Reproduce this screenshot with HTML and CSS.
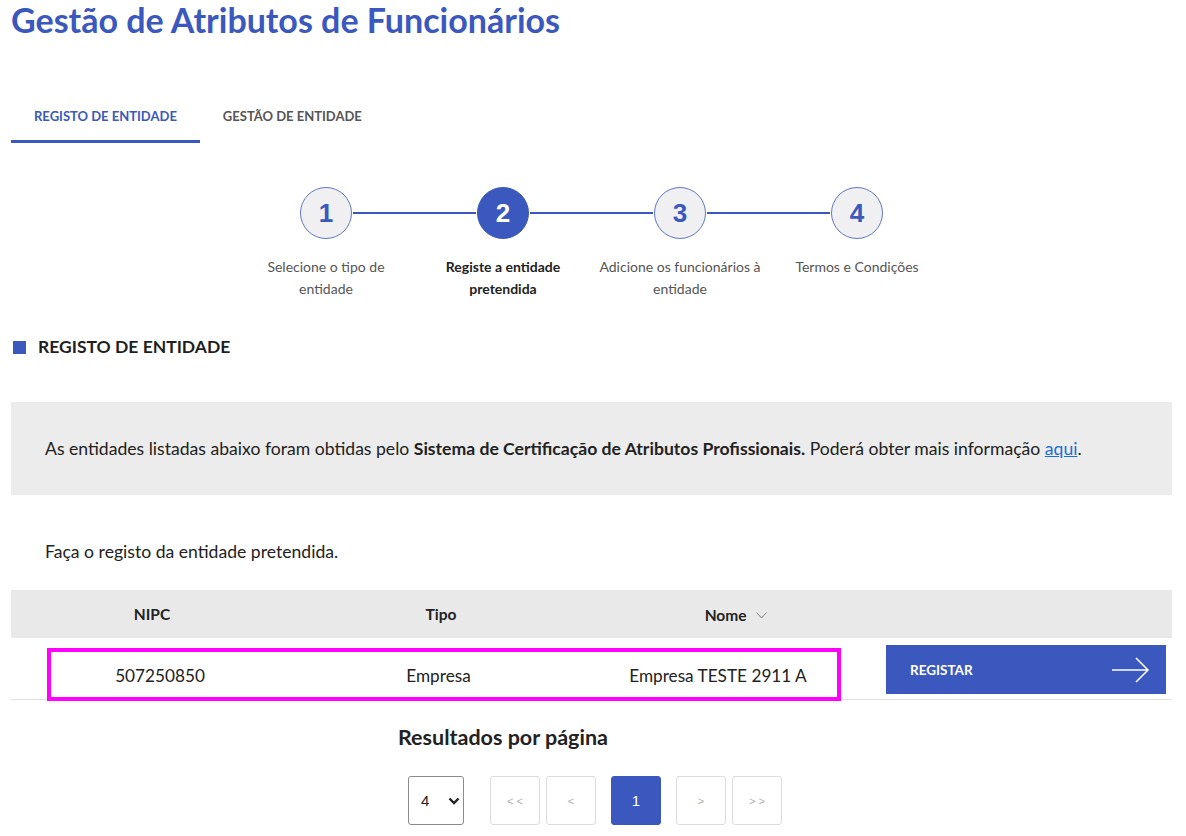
FILE: index.html
```html
<!DOCTYPE html>
<html lang="pt">
<head>
    <meta charset="UTF-8">
    <meta name="viewport" content="width=device-width, initial-scale=1.0">
    <title>Gestão de Atributos de Funcionários</title>
    <link rel="stylesheet" href="styles.css">
</head>
<body>
    <main class="page">
        <h1 class="page-title">Gestão de Atributos de Funcionários</h1>

        <!-- Tabs -->
        <nav class="tabs">
            <a class="tab active" href="#">REGISTO DE ENTIDADE</a>
            <a class="tab" href="#">GESTÃO DE ENTIDADE</a>
        </nav>

        <!-- Stepper -->
        <ol class="stepper">
            <li class="step">
                <span class="step-circle">1</span>
                <span class="step-label">Selecione o tipo de entidade</span>
            </li>
            <li class="step current">
                <span class="step-circle">2</span>
                <span class="step-label">Registe a entidade pretendida</span>
            </li>
            <li class="step">
                <span class="step-circle">3</span>
                <span class="step-label">Adicione os funcionários à entidade</span>
            </li>
            <li class="step">
                <span class="step-circle">4</span>
                <span class="step-label">Termos e Condições</span>
            </li>
        </ol>

        <h2 class="section-title"><span class="section-mark"></span>REGISTO DE ENTIDADE</h2>

        <div class="info-box">
            As entidades listadas abaixo foram obtidas pelo <strong>Sistema de Certificação de Atributos Profissionais.</strong> Poderá obter mais informação <a href="#">aqui</a>.
        </div>

        <p class="intro">Faça o registo da entidade pretendida.</p>

        <!-- Table -->
        <div class="table">
            <div class="table-head">
                <div class="cell">NIPC</div>
                <div class="cell">Tipo</div>
                <div class="cell col-name">Nome <span class="sort-icon">
                    <svg width="11" height="7" viewBox="0 0 11 7"><path d="M0.5 0.5 L5.5 6 L10.5 0.5" fill="none" stroke="#888" stroke-width="1"/></svg>
                </span></div>
                <div class="cell"></div>
            </div>
            <div class="table-row">
                <div class="cell">507250850</div>
                <div class="cell col-type">Empresa</div>
                <div class="cell col-name">Empresa TESTE 2911 A</div>
                <div class="cell action">
                    <button class="btn-register">
                        <span>REGISTAR</span>
                        <svg width="38" height="26" viewBox="0 0 38 26"><path d="M0 13 H36 M24 1 L36 13 L24 25" fill="none" stroke="#fff" stroke-width="1.5"/></svg>
                    </button>
                </div>
                <div class="row-highlight"></div>
            </div>
        </div>

        <!-- Pagination -->
        <div class="pager">
            <h3 class="pager-title">Resultados por página</h3>
            <div class="pager-controls">
                <div class="page-size">
                    <span>4</span>
                    <svg width="12" height="8" viewBox="0 0 12 8"><path d="M1.5 1.5 L6 6 L10.5 1.5" fill="none" stroke="#222" stroke-width="2.4"/></svg>
                </div>
                <div class="pages">
                    <span class="page-btn">&lt; &lt;</span>
                    <span class="page-btn">&lt;</span>
                    <span class="page-btn active">1</span>
                    <span class="page-btn">&gt;</span>
                    <span class="page-btn">&gt; &gt;</span>
                </div>
            </div>
        </div>
    </main>
</body>
</html>
```

FILE: styles.css
```css
/* Base */
body {
    margin: 0;
    font-family: 'Lato', 'Open Sans', sans-serif;
    color: #222;
    background-color: #fff;
}

.page {
    width: 1161px;
    margin-left: 11px;
}

.page-title {
    margin: 0;
    font-size: 34px;
    line-height: 40px;
    font-weight: 700;
    color: #3a58bd;
}

/* Tabs */
.tabs {
    display: flex;
    margin-top: 52px;
}

.tab {
    display: block;
    padding: 16px 23px 15px;
    font-size: 13px;
    line-height: 17px;
    font-weight: 700;
    color: #555;
    text-decoration: none;
    border-bottom: 3px solid transparent;
}

.tab.active {
    color: #3a58bd;
    border-bottom-color: #3a58bd;
}

/* Stepper */
.stepper {
    display: flex;
    justify-content: center;
    list-style: none;
    margin: 44px 0 0;
    padding: 0;
}

.step {
    position: relative;
    width: 177px;
    display: flex;
    flex-direction: column;
    align-items: center;
}

.step:not(:last-child)::after {
    content: '';
    position: absolute;
    top: 25px;
    left: calc(50% + 27px);
    width: calc(100% - 54px);
    height: 2px;
    background-color: #3a58bd;
}

.step-circle {
    width: 50px;
    height: 50px;
    border: 1px solid #5f78c9;
    border-radius: 50%;
    background-color: #f0f0f2;
    display: flex;
    justify-content: center;
    align-items: center;
    font-family: 'Liberation Sans', Arial, sans-serif;
    font-size: 26px;
    font-weight: 700;
    color: #3a58bd;
}

.step.current .step-circle {
    background-color: #3a58bd;
    border-color: #3a58bd;
    color: #fff;
}

.step-label {
    width: 165px;
    margin-top: 17px;
    text-align: center;
    font-size: 14px;
    line-height: 22px;
    color: #555;
}

.step.current .step-label {
    font-weight: 700;
    color: #222;
}

/* Section title */
.section-title {
    display: flex;
    align-items: center;
    margin: 35px 0 0 2px;
    font-size: 17.5px;
    line-height: 24px;
    font-weight: 700;
    color: #1f1f1f;
}

.section-mark {
    width: 13px;
    height: 13px;
    margin-right: 12px;
    background-color: #3a58bd;
}

/* Info box */
.info-box {
    margin-top: 43px;
    padding: 36px 34px 35px;
    font-size: 17.6px;
    line-height: 22px;
    background-color: #ececec;
}

.info-box a {
    color: #1a6fd8;
}

.intro {
    margin: 46px 0 0 34px;
    font-size: 17.6px;
    line-height: 22px;
}

/* Table */
.table {
    margin-top: 27px;
}

.table-head,
.table-row {
    display: grid;
    grid-template-columns: 282px 296px 272px 311px;
    align-items: center;
}

.table-head {
    height: 48px;
    background-color: #e9e9ea;
    font-size: 15.5px;
    font-weight: 700;
}

.table-head .cell {
    text-align: center;
}

.table-head .col-name {
    padding-left: 22px;
}

.sort-icon {
    margin-left: 6px;
    vertical-align: 2px;
}

.table-row {
    position: relative;
    height: 61px;
    border-bottom: 1px solid #e2e2e2;
    font-size: 17.2px;
}

.table-row .cell {
    text-align: center;
    padding-top: 14px;
}

.table-row .cell:first-child {
    padding-left: 16px;
}

.table-row .col-type {
    padding-right: 5px;
}

.table-row .col-name {
    padding-right: 14px;
}

.table-row .cell.action {
    padding-top: 2px;
    text-align: left;
    padding-left: 25px;
}

.btn-register {
    width: 280px;
    height: 49px;
    border: none;
    background-color: #3a58bd;
    color: #fff;
    display: flex;
    align-items: center;
    justify-content: space-between;
    padding: 0 16px 0 24px;
    font-family: 'Lato', sans-serif;
    font-size: 13.5px;
    font-weight: 700;
    cursor: pointer;
}

.row-highlight {
    position: absolute;
    left: 36px;
    top: 10px;
    width: 786px;
    height: 45px;
    border: 4px solid #ff00ff;
    pointer-events: none;
}

/* Pagination */
.pager {
    margin: 23px 0 0 387px;
}

.pager-title {
    margin: 0;
    font-size: 21.5px;
    line-height: 28px;
    font-weight: 700;
    color: #222;
}

.pager-controls {
    display: flex;
    align-items: center;
    margin: 25px 0 0 10px;
}

.page-size {
    width: 56px;
    height: 49px;
    box-sizing: border-box;
    border: 1px solid #8a8a8a;
    border-radius: 3px;
    display: flex;
    align-items: center;
    justify-content: space-between;
    padding: 0 3px 0 12px;
    font-family: 'Liberation Sans', Arial, sans-serif;
    font-size: 15px;
}

.pages {
    display: flex;
    margin-left: 26px;
}

.page-btn {
    width: 50px;
    height: 49px;
    box-sizing: border-box;
    border: 1px solid #dcdcdc;
    border-radius: 3px;
    display: flex;
    align-items: center;
    justify-content: center;
    font-family: 'Liberation Sans', Arial, sans-serif;
    font-size: 11px;
    color: #b0b0b0;
    margin-right: 6px;
}

.page-btn:nth-child(2),
.page-btn:nth-child(3) {
    margin-right: 15px;
}

.page-btn.active {
    background-color: #3a58bd;
    border-color: #3a58bd;
    color: #fff;
    font-size: 15px;
}
```
